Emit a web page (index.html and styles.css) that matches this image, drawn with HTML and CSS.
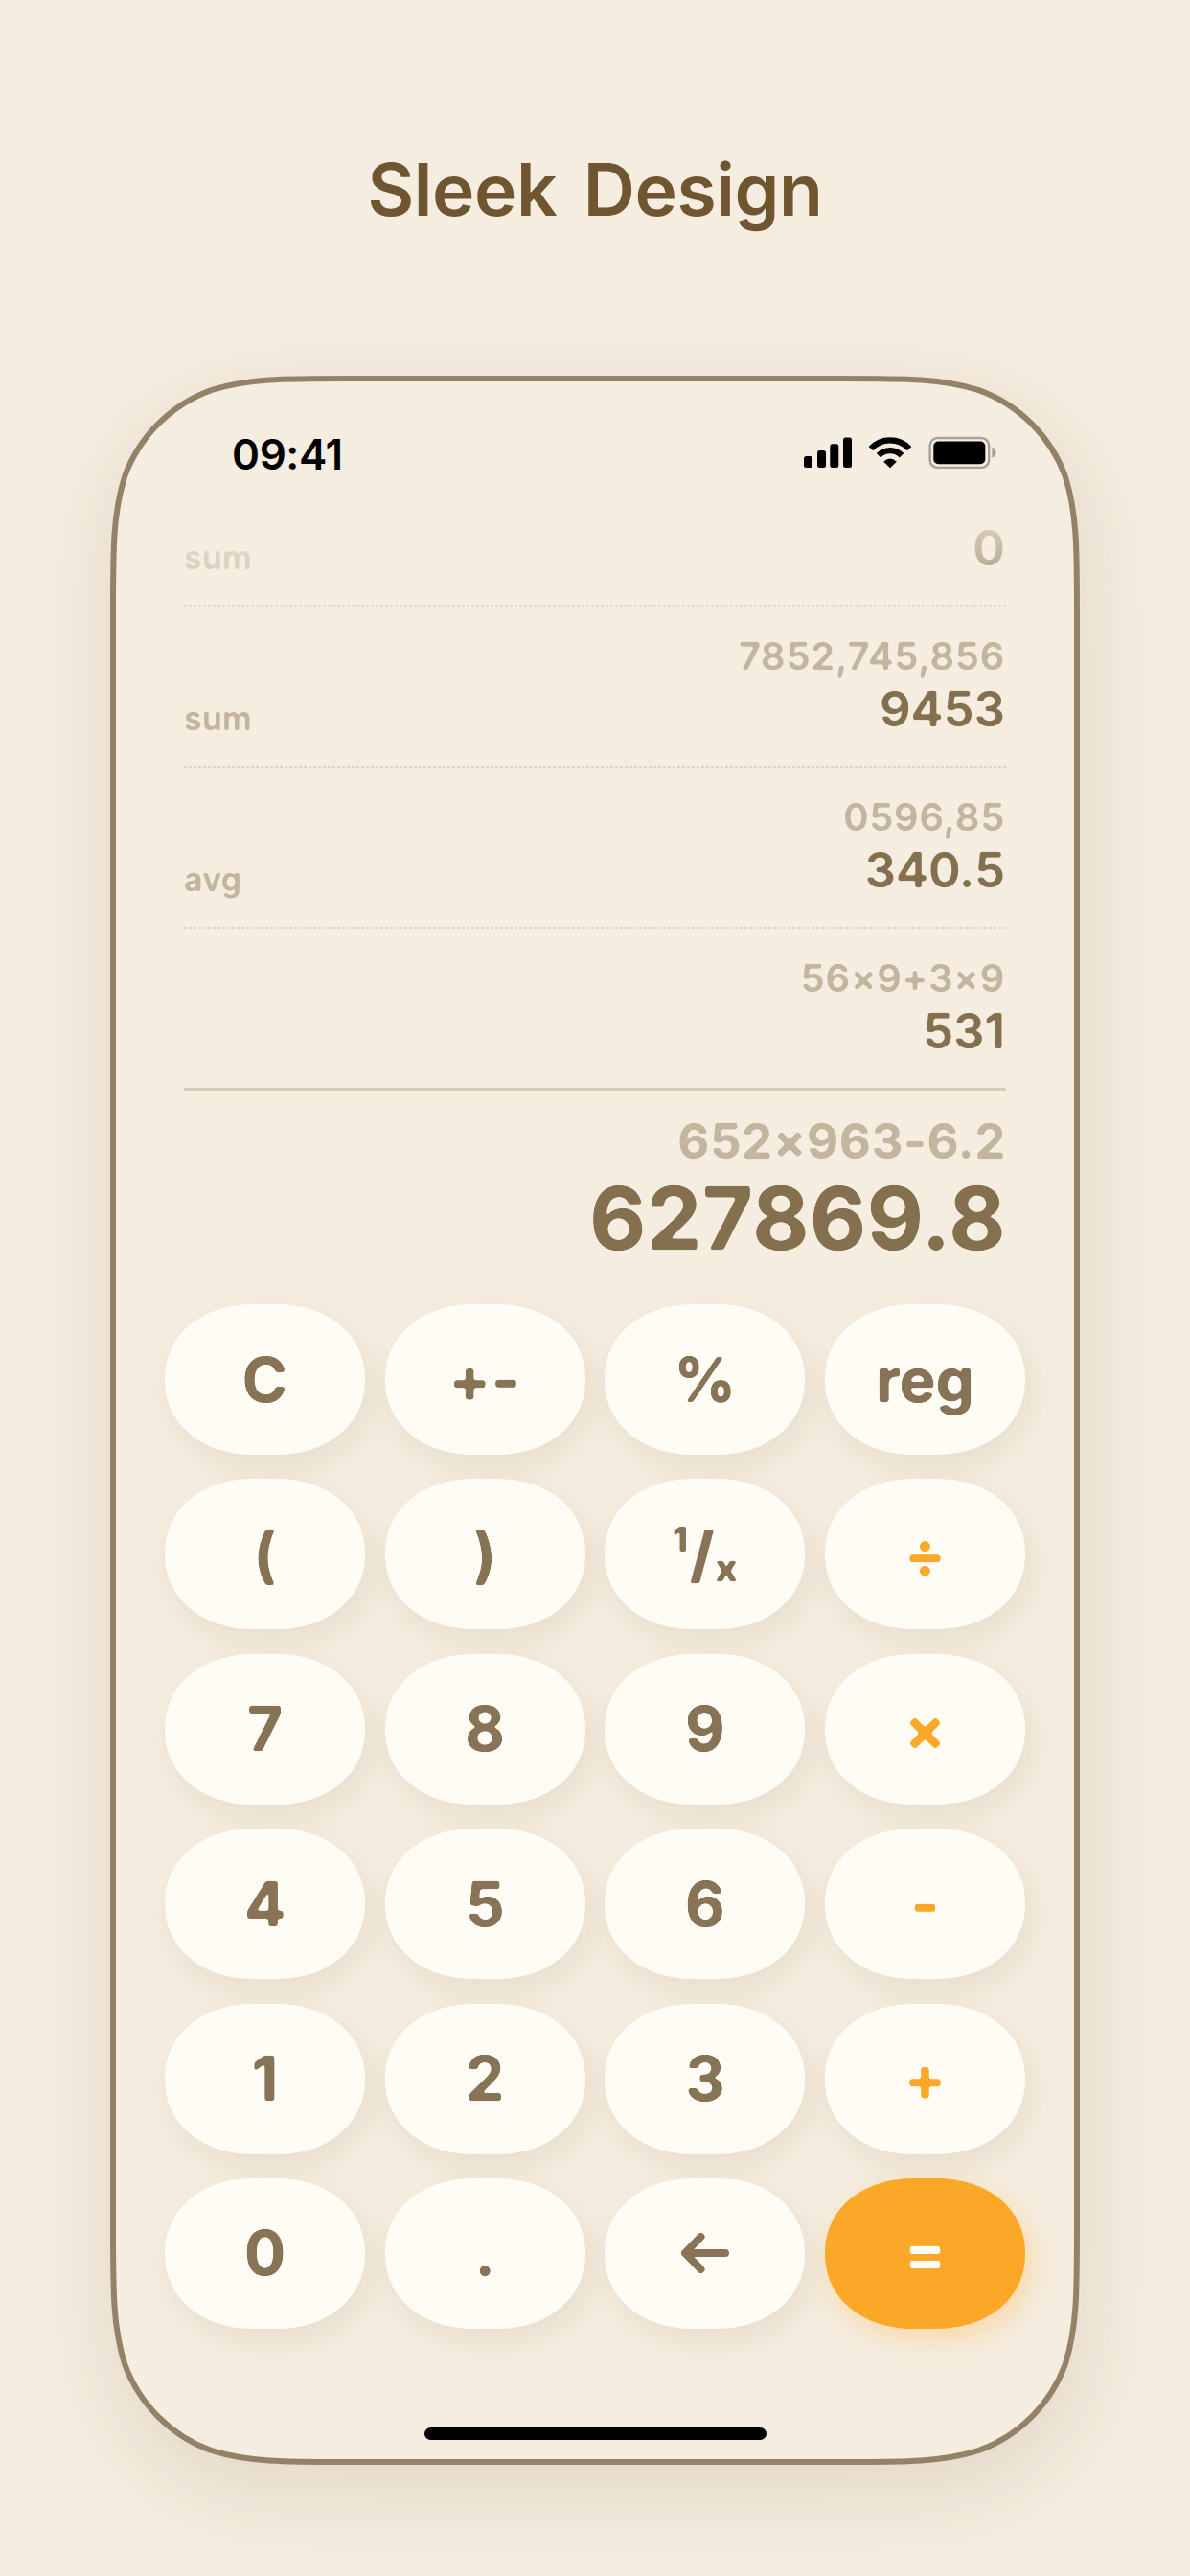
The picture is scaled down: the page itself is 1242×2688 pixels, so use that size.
FILE: index.html
```html
<!DOCTYPE html>
<html lang="en">
<head>
    <meta charset="UTF-8">
    <meta name="viewport" content="width=device-width, initial-scale=1.0">
    <title>Calculator | Sleek Design</title>
    <link rel="stylesheet" href="styles.css">
</head>
<body>
    <!-- Filters that round off the text corners -->
    <svg class="filters" width="0" height="0" aria-hidden="true">
        <filter id="round-small" color-interpolation-filters="sRGB">
            <feGaussianBlur stdDeviation="1.1"/>
            <feColorMatrix values="1 0 0 0 0  0 1 0 0 0  0 0 1 0 0  0 0 0 3 -0.9"/>
        </filter>
        <filter id="round-large" color-interpolation-filters="sRGB">
            <feGaussianBlur stdDeviation="1.8"/>
            <feColorMatrix values="1 0 0 0 0  0 1 0 0 0  0 0 1 0 0  0 0 0 5 -1.75"/>
        </filter>
    </svg>

    <h1 class="title">Sleek Design</h1>

    <main class="phone">
        <svg class="phone-frame" viewBox="0 0 1012 2180" aria-hidden="true">
            <path d="M250.6 3H761.4C832.7 3 868.3 3 906.7 15.1C948.6 30.4 981.6 63.4 996.9 105.3C1009 143.7 1009 179.3 1009 250.6V1929.4C1009 2000.7 1009 2036.3 996.9 2074.7C981.6 2116.6 948.6 2149.6 906.7 2164.9C868.3 2177 832.7 2177 761.4 2177H250.6C179.3 2177 143.7 2177 105.3 2164.9C63.4 2149.6 30.4 2116.6 15.1 2074.7C3 2036.3 3 2000.7 3 1929.4V250.6C3 179.3 3 143.7 15.1 105.3C30.4 63.4 63.4 30.4 105.3 15.1C143.7 3 179.3 3 250.6 3Z"/>
        </svg>

        <!-- Status Bar -->
        <div class="status-bar">
            <span class="time">09:41</span>
            <svg class="status-icons" width="202" height="34" viewBox="0 0 202 34">
                <rect x="0" y="21" width="9" height="12" rx="2.5"/>
                <rect x="14" y="15" width="9" height="18" rx="2.5"/>
                <rect x="27.3" y="8.3" width="9" height="24.7" rx="2.5"/>
                <rect x="41" y="1.6" width="9" height="31.4" rx="2.5"/>
                <path class="wifi" d="M70 13.2A27 27 0 0 1 110 13.2"/>
                <path class="wifi" d="M78 20.3A16.5 16.5 0 0 1 102 20.3"/>
                <path d="M90 33.3L83.2 26.7Q90 20.5 96.8 26.7Z"/>
                <rect class="battery" x="131.6" y="2" width="61.6" height="31" rx="8"/>
                <rect x="135.3" y="5.6" width="54" height="23.6" rx="5"/>
                <path class="battery-tip" d="M196.3 11.6Q200.6 13.5 200.6 17.2T196.3 22.8Z"/>
            </svg>
        </div>

        <!-- History -->
        <div class="history">
            <div class="row">
                <span class="label">sum</span>
                <div class="result"><span class="value">0</span></div>
            </div>
            <div class="row">
                <span class="label">sum</span>
                <div class="result">
                    <span class="expr">7852,745,856</span>
                    <span class="value">9453</span>
                </div>
            </div>
            <div class="row">
                <span class="label">avg</span>
                <div class="result">
                    <span class="expr">0596,85</span>
                    <span class="value">340.5</span>
                </div>
            </div>
            <div class="row">
                <div class="result">
                    <span class="expr">56×9+3×9</span>
                    <span class="value">531</span>
                </div>
            </div>
        </div>

        <!-- Current calculation -->
        <div class="current">
            <span class="current-expr">652×963-6.2</span>
            <span class="current-value">627869.8</span>
        </div>

        <!-- Keypad -->
        <div class="keypad">
            <button class="key"><span>C</span></button>
            <button class="key"><span class="plus-minus">+-</span></button>
            <button class="key"><span>%</span></button>
            <button class="key"><span>reg</span></button>

            <button class="key"><span>(</span></button>
            <button class="key"><span>)</span></button>
            <button class="key"><span class="fraction"><sup>1</sup>/<sub>x</sub></span></button>
            <button class="key operator"><span>÷</span></button>

            <button class="key"><span>7</span></button>
            <button class="key"><span>8</span></button>
            <button class="key"><span>9</span></button>
            <button class="key operator"><span>×</span></button>

            <button class="key"><span>4</span></button>
            <button class="key"><span>5</span></button>
            <button class="key"><span>6</span></button>
            <button class="key operator"><span>-</span></button>

            <button class="key"><span>1</span></button>
            <button class="key"><span>2</span></button>
            <button class="key"><span>3</span></button>
            <button class="key operator"><span>+</span></button>

            <button class="key"><span>0</span></button>
            <button class="key"><span>.</span></button>
            <button class="key" aria-label="Backspace">
                <svg class="arrow" width="50" height="42" viewBox="0 0 50 42">
                    <path d="M20.5 4L4 21L20.5 38M5 21H46"/>
                </svg>
            </button>
            <button class="key equals"><span>=</span></button>
        </div>

        <div class="home-indicator"></div>
    </main>
</body>
</html>
```

FILE: styles.css
```css
* {
    box-sizing: border-box;
}
body {
    font-family: Inter, "Liberation Sans", sans-serif;
    background-color: #f5ede0;
    margin: 0;
    padding: 0;
    height: 2688px;
    overflow: hidden;
}
.filters {
    position: absolute;
}
.title {
    margin: 0;
    padding-top: 148px;
    height: 392px;
    font-size: 75px;
    line-height: 100px;
    font-weight: 560;
    letter-spacing: -0.4px;
    word-spacing: 9px;
    text-align: center;
    color: #6f5530;
}
.phone {
    position: relative;
    width: 1012px;
    height: 2180px;
    margin: 0 auto;
    display: flex;
    flex-direction: column;
    align-items: center;
}
.phone-frame {
    position: absolute;
    top: 0;
    left: 0;
    width: 100%;
    height: 100%;
    z-index: -1;
    overflow: visible;
    fill: #f5ede0;
    stroke: #938268;
    stroke-width: 6;
    filter: drop-shadow(4px 28px 48px rgba(110, 80, 40, 0.14));
}
.status-bar {
    width: 100%;
    height: 148px;
    padding: 16px 86px 0 127px;
    display: flex;
    justify-content: space-between;
    align-items: center;
}
.time {
    font-size: 44px;
    font-weight: 600;
    letter-spacing: -0.4px;
}
.status-icons {
    margin-top: -4px;
}
.wifi {
    fill: none;
    stroke: #000;
    stroke-width: 6.4;
}
.battery {
    fill: none;
    stroke: #a8a297;
    stroke-width: 2.4;
}
.battery-tip {
    fill: #a8a297;
}
.history {
    width: 858px;
    height: 598px;
    display: flex;
    flex-direction: column;
    justify-content: flex-end;
    overflow: hidden;
    -webkit-mask-image: linear-gradient(rgba(0, 0, 0, 0.2), #000 130px);
    mask-image: linear-gradient(rgba(0, 0, 0, 0.2), #000 130px);
}
.row {
    flex: none;
    height: 168px;
    padding: 0 1px 31px 0;
    display: flex;
    align-items: flex-end;
    background: repeating-linear-gradient(90deg, #ddd2c3 0 3px, transparent 3px 5px) bottom / 100% 2px no-repeat;
}
.row:last-child {
    height: 169px;
    padding-bottom: 32px;
    background: linear-gradient(#d8ccb8, #d8ccb8) bottom / 100% 3px no-repeat;
}
.label {
    font-size: 34px;
    line-height: 40px;
    font-weight: 560;
    letter-spacing: 0.2px;
    color: #c3b59e;
    filter: url(#round-small);
}
.result {
    margin-left: auto;
    display: flex;
    flex-direction: column;
    align-items: flex-end;
}
.expr {
    font-size: 40px;
    line-height: 50px;
    font-weight: 560;
    letter-spacing: 0.7px;
    color: #c3b59e;
    filter: url(#round-small);
}
.value {
    font-size: 51px;
    line-height: 60px;
    font-weight: 580;
    color: #84704f;
    filter: url(#round-small);
}
.current {
    width: 858px;
    height: 223px;
    padding-top: 18px;
    display: flex;
    flex-direction: column;
    align-items: flex-end;
}
.current-expr {
    font-size: 51px;
    line-height: 70px;
    font-weight: 700;
    letter-spacing: 0.6px;
    color: #c3b59e;
    filter: url(#round-small);
}
.current-value {
    font-size: 91px;
    line-height: 90px;
    font-weight: 700;
    letter-spacing: 0.6px;
    color: #84704f;
    filter: url(#round-large);
}
.keypad {
    width: 898px;
    display: grid;
    grid-template-columns: repeat(4, 1fr);
    grid-auto-rows: 157px;
    gap: 25.4px 20.6px;
}
.key {
    border: none;
    padding: 0;
    display: flex;
    justify-content: center;
    align-items: center;
    border-radius: 84px / 78px;
    background-color: #fffcf5;
    box-shadow: 6px 12px 32px rgba(120, 85, 45, 0.1);
    font-family: inherit;
    font-size: 64px;
    line-height: 80px;
    font-weight: 700;
    color: #877355;
}
@supports (corner-shape: superellipse(1.1)) {
    .key {
        border-radius: 93px / 78px;
        corner-shape: superellipse(1.08);
    }
}
.key span {
    filter: url(#round-large);
}
.key .plus-minus {
    letter-spacing: 1px;
}
.key .fraction {
    font-weight: 800;
    filter: url(#round-small);
}
.fraction sup, .fraction sub {
    line-height: 0;
}
.fraction sup {
    font-size: 36px;
    margin-right: 2px;
    vertical-align: 26px;
}
.fraction sub {
    font-size: 39px;
    margin-left: 1px;
    vertical-align: -5px;
}
.operator {
    color: #fba829;
}
.equals {
    background-color: #fba829;
    box-shadow: 6px 10px 28px rgba(251, 175, 50, 0.32);
    color: #fffcf5;
}
.arrow {
    fill: none;
    stroke: #877355;
    stroke-width: 8;
    stroke-linecap: round;
    stroke-linejoin: round;
}
.home-indicator {
    width: 357px;
    height: 13px;
    margin-top: 103px;
    border-radius: 7px;
    background-color: #000;
}
```
